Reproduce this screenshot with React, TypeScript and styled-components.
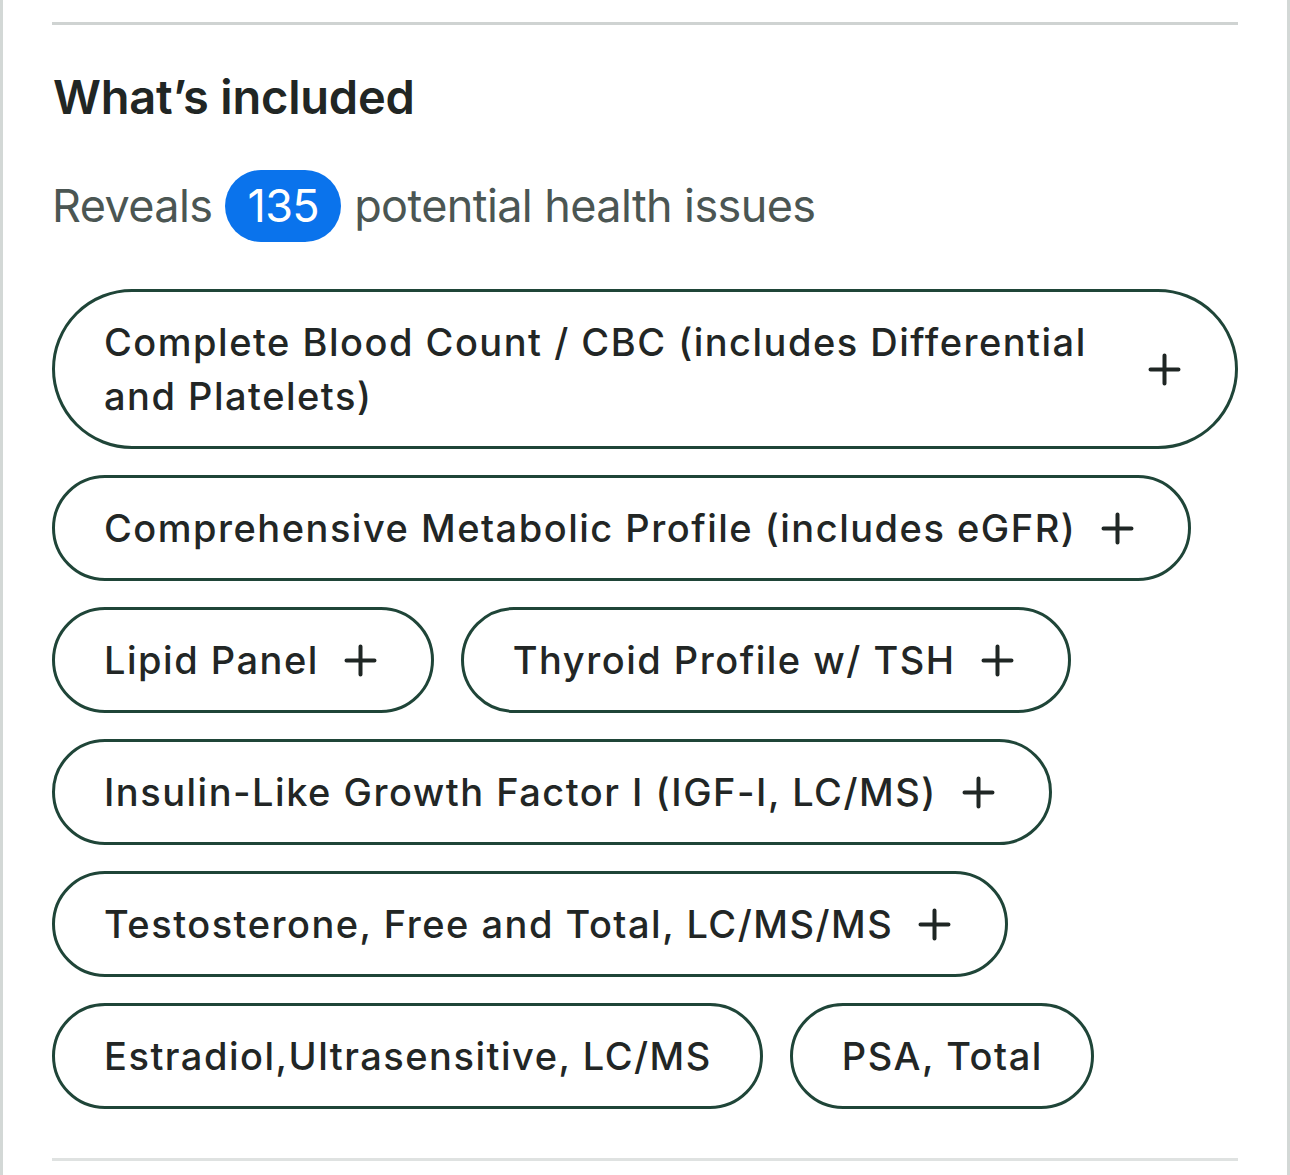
import React from "react";
import styled, { createGlobalStyle } from "styled-components";

interface Test {
  name: string;
  expandable: boolean;
}

const tests: Test[] = [
  { name: "Complete Blood Count / CBC (includes Differential and Platelets)", expandable: true },
  { name: "Comprehensive Metabolic Profile (includes eGFR)", expandable: true },
  { name: "Lipid Panel", expandable: true },
  { name: "Thyroid Profile w/ TSH", expandable: true },
  { name: "Insulin-Like Growth Factor I (IGF-I, LC/MS)", expandable: true },
  { name: "Testosterone, Free and Total, LC/MS/MS", expandable: true },
  { name: "Estradiol,Ultrasensitive, LC/MS", expandable: false },
  { name: "PSA, Total", expandable: false },
];

const PlusIcon: React.FC = () => (
  <svg width="33" height="33" viewBox="0 0 33 33" aria-hidden="true">
    <path
      d="M16.5 2.5v28M2.5 16.5h28"
      stroke="#1f2624"
      strokeWidth="4"
      strokeLinecap="round"
      fill="none"
    />
  </svg>
);

const App: React.FC = () => {
  return (
    <>
      <GlobalStyle />
      <Page>
        <Divider />
        <Heading>What’s included</Heading>
        <Summary>
          Reveals <Count>135</Count> potential health issues
        </Summary>
        <ChipList>
          {tests.map((t) => (
            <Chip key={t.name} $expandable={t.expandable}>
              <ChipLabel>{t.name}</ChipLabel>
              {t.expandable && <PlusIcon />}
            </Chip>
          ))}
        </ChipList>
        <Divider $light />
      </Page>
    </>
  );
};

const GlobalStyle = createGlobalStyle`
  html, body {
    margin: 0;
    padding: 0;
    background: #fff;
  }
  * {
    box-sizing: border-box;
  }
`;

const Page = styled.div`
  width: 1290px;
  min-height: 1175px;
  border-left: 3px solid #d3d8d6;
  border-right: 3px solid #d3d8d6;
  padding: 22px 49px 0;
  font-family: Inter, "Noto Sans", sans-serif;
  display: flex;
  flex-direction: column;
`;

const Divider = styled.div<{ $light?: boolean }>`
  height: 3px;
  background: ${(p) => (p.$light ? "#dfe2e1" : "#cfd3d2")};
  margin-top: ${(p) => (p.$light ? "49px" : "0")};
`;

const Heading = styled.h2`
  margin: 44px 0 0 1px;
  font-size: 47px;
  line-height: 56px;
  font-weight: 600;
  color: #212624;
  letter-spacing: -0.2px;
`;

const Summary = styled.div`
  display: flex;
  align-items: center;
  gap: 13px;
  margin-top: 45px;
  font-size: 45px;
  line-height: 72px;
  color: #4b5653;
  letter-spacing: -0.6px;
`;

const Count = styled.span`
  display: inline-flex;
  align-items: center;
  justify-content: center;
  height: 72px;
  padding: 0 22px;
  border-radius: 36px;
  background: #0a73ec;
  color: #fff;
`;

const ChipList = styled.div`
  display: flex;
  flex-wrap: wrap;
  gap: 26px 27px;
  margin-top: 47px;
`;

const Chip = styled.div<{ $expandable: boolean }>`
  display: inline-flex;
  align-items: center;
  gap: 25px;
  max-width: 100%;
  padding: 23px ${(p) => (p.$expandable ? "54px" : "48px")} 23px 49px;
  border: 3px solid #1f4538;
  border-radius: 999px;
  color: #222625;
  font-size: 38px;
  line-height: 54px;
  font-weight: 500;
  letter-spacing: 1.5px;

  svg {
    flex-shrink: 0;
  }
`;

const ChipLabel = styled.span`
  flex: 1;
`;

export default App;
